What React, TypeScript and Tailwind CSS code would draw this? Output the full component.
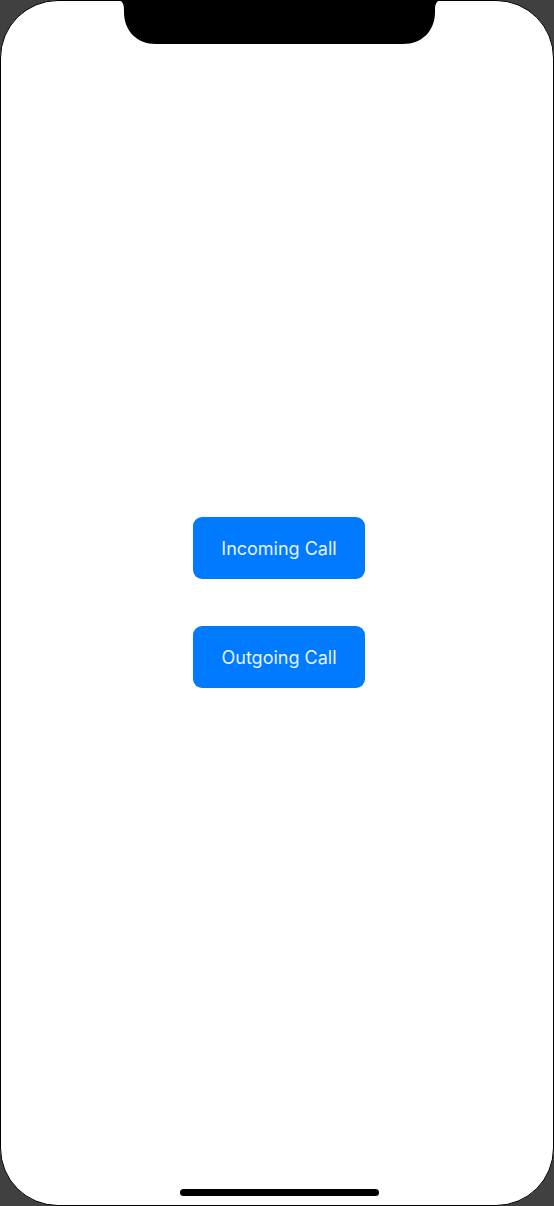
import React from "react";

export default function App() {
  return (
    <div className="w-[554px] h-[1206px] bg-[#404040] relative overflow-hidden" style={{ fontFamily: "Inter, 'Noto Sans', sans-serif" }}>
      <div className="absolute inset-0 bg-white rounded-[58px] border border-black flex flex-col items-center justify-center gap-[47px] pl-[4px] pb-[2px]">
        <button className="w-[172px] h-[62px] rounded-[9px] bg-[#007aff] text-[#e8f1ff] text-[18px] font-normal pt-[2px]">
          Incoming Call
        </button>
        <button className="w-[172px] h-[62px] rounded-[9px] bg-[#007aff] text-[#e8f1ff] text-[18px] font-normal pt-[2px]">
          Outgoing Call
        </button>
      </div>
      <svg className="absolute left-[116px] top-0" width="328" height="46" viewBox="0 0 328 46">
        <path d="M0 0 C6 0 8 3 8 10 L8 12 C8 31 21 44 40 44 L287 44 C306 44 319 31 319 12 L319 10 C319 3 321 0 327 0 Z" fill="#000" />
      </svg>
      <div className="absolute left-[180px] top-[1189px] w-[199px] h-[7px] rounded-full bg-black" />
    </div>
  );
}
